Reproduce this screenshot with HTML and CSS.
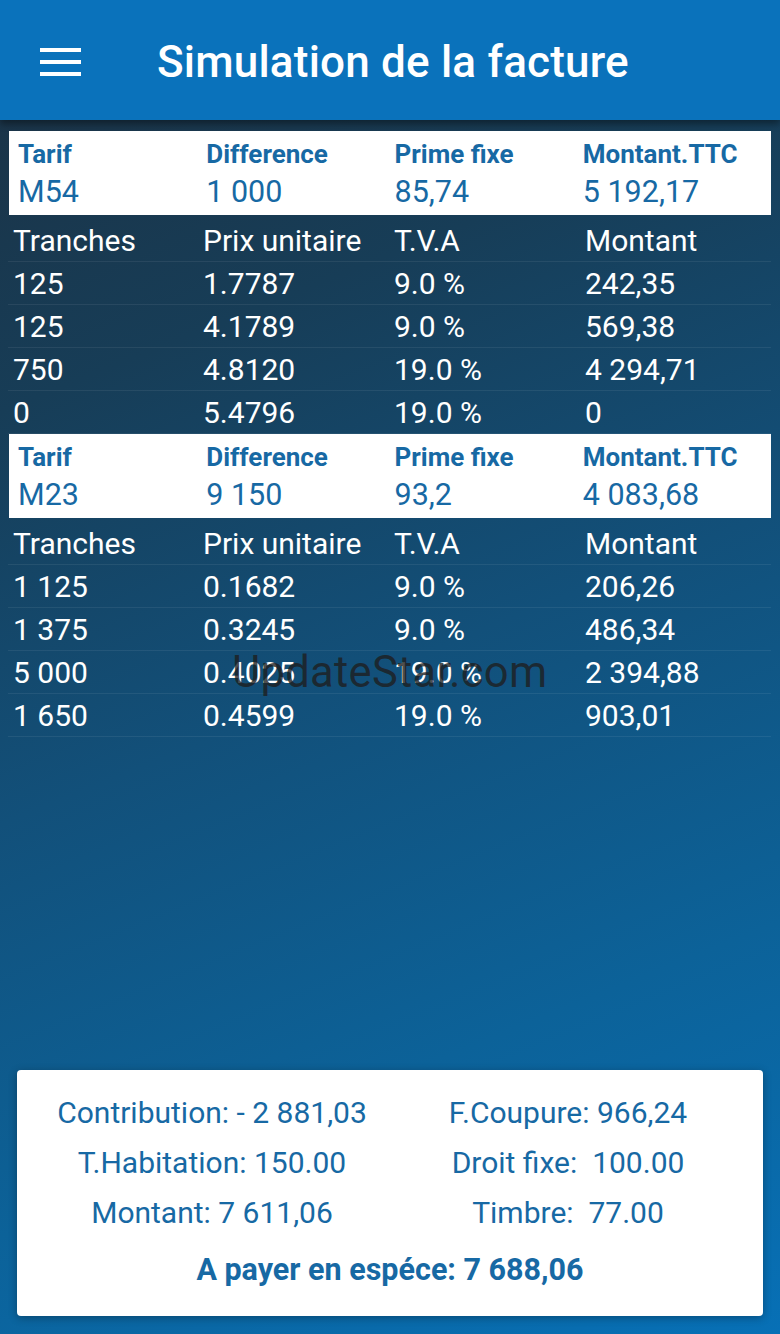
FILE: index.html
```html
<!DOCTYPE html>
<html lang="fr">
<head>
    <meta charset="UTF-8">
    <meta name="viewport" content="width=device-width, initial-scale=1.0">
    <title>Simulation de la facture</title>
    <link rel="stylesheet" href="styles.css">
</head>
<body>
    <div class="page">
        <header class="toolbar">
            <div class="menu-btn">
                <svg width="41" height="28" viewBox="0 0 41 28">
                    <rect x="0" y="0" width="41" height="4" fill="#fff"/>
                    <rect x="0" y="12" width="41" height="4" fill="#fff"/>
                    <rect x="0" y="24" width="41" height="4" fill="#fff"/>
                </svg>
            </div>
            <h1>Simulation de la facture</h1>
        </header>

        <div class="tables">
            <div class="tarif-box">
                <span class="lbl">Tarif</span>
                <span class="lbl">Difference</span>
                <span class="lbl">Prime fixe</span>
                <span class="lbl">Montant.TTC</span>
                <span class="val">M54</span>
                <span class="val">1 000</span>
                <span class="val">85,74</span>
                <span class="val">5 192,17</span>
            </div>
            <div class="row"><span>Tranches</span><span>Prix unitaire</span><span>T.V.A</span><span>Montant</span></div>
            <div class="row"><span>125</span><span>1.7787</span><span>9.0 %</span><span>242,35</span></div>
            <div class="row"><span>125</span><span>4.1789</span><span>9.0 %</span><span>569,38</span></div>
            <div class="row"><span>750</span><span>4.8120</span><span>19.0 %</span><span>4 294,71</span></div>
            <div class="row"><span>0</span><span>5.4796</span><span>19.0 %</span><span>0</span></div>

            <div class="tarif-box">
                <span class="lbl">Tarif</span>
                <span class="lbl">Difference</span>
                <span class="lbl">Prime fixe</span>
                <span class="lbl">Montant.TTC</span>
                <span class="val">M23</span>
                <span class="val">9 150</span>
                <span class="val">93,2</span>
                <span class="val">4 083,68</span>
            </div>
            <div class="row"><span>Tranches</span><span>Prix unitaire</span><span>T.V.A</span><span>Montant</span></div>
            <div class="row"><span>1 125</span><span>0.1682</span><span>9.0 %</span><span>206,26</span></div>
            <div class="row"><span>1 375</span><span>0.3245</span><span>9.0 %</span><span>486,34</span></div>
            <div class="row"><span>5 000</span><span>0.4025</span><span>19.0 %</span><span>2 394,88</span></div>
            <div class="row"><span>1 650</span><span>0.4599</span><span>19.0 %</span><span>903,01</span></div>

            <div class="watermark">UpdateStar.com</div>
        </div>

        <div class="summary">
            <div class="sum-grid">
                <span>Contribution: - 2 881,03</span>
                <span>F.Coupure: 966,24</span>
                <span>T.Habitation: 150.00</span>
                <span>Droit fixe:&nbsp; 100.00</span>
                <span>Montant: 7 611,06</span>
                <span>Timbre:&nbsp; 77.00</span>
            </div>
            <div class="total">A payer en espéce: 7 688,06</div>
        </div>
    </div>
</body>
</html>
```

FILE: styles.css
```css
body {
    margin: 0;
    font-family: Roboto, 'Noto Sans', sans-serif;
    background: #0c5f97;
}
.page {
    min-height: 100vh;
    display: flex;
    flex-direction: column;
    background: linear-gradient(158deg, #1c3143 0%, #173d57 25%, #12507a 50%, #0c6299 75%, #0770b6 100%);
}
.toolbar {
    height: 120px;
    display: flex;
    align-items: center;
    background-color: #0a72bb;
    box-shadow: 0 4px 7px rgba(0, 0, 0, 0.4);
}
.menu-btn {
    width: 41px;
    height: 28px;
    margin: 4px 0 0 40px;
    display: flex;
}
.toolbar h1 {
    margin: 4px 0 0 76px;
    color: #fff;
    font-size: 44px;
    font-weight: 500;
    letter-spacing: 0.2px;
}
.tables {
    position: relative;
    margin: 11px 9px 0 9px;
}
.tarif-box {
    display: grid;
    grid-template-columns: repeat(4, 1fr);
    padding: 7px 0 4px 9px;
    background-color: #fff;
    margin-bottom: 4px;
}
.tarif-box .lbl {
    color: #1769a4;
    font-size: 26px;
    font-weight: 700;
    line-height: 32px;
}
.tarif-box .val {
    color: #1769a4;
    font-size: 30.5px;
    line-height: 39px;
    padding-top: 2px;
}
.row {
    display: grid;
    grid-template-columns: 190px 191px 191px 1fr;
    height: 42px;
    align-items: center;
    padding-left: 5px;
    margin-left: -1px;
    border-bottom: 1px solid rgba(255, 255, 255, 0.07);
    color: #fff;
    font-size: 30px;
}
.watermark {
    position: absolute;
    left: 223px;
    top: 516px;
    color: rgba(30, 30, 30, 0.8);
    font-size: 43.5px;
    letter-spacing: 0.3px;
}
.summary {
    margin: auto 17px 18px 17px;
    padding: 18px 17px 21px 17px;
    background-color: #fff;
    border-radius: 4px;
    box-shadow: 0 2px 8px rgba(0, 0, 0, 0.3);
    color: #1769a4;
    text-align: center;
}
.sum-grid {
    display: grid;
    grid-template-columns: 1fr 1fr;
    font-size: 30px;
    line-height: 50px;
}
.total {
    margin-top: 7px;
    font-size: 30.5px;
    font-weight: 700;
    line-height: 50px;
}
```
